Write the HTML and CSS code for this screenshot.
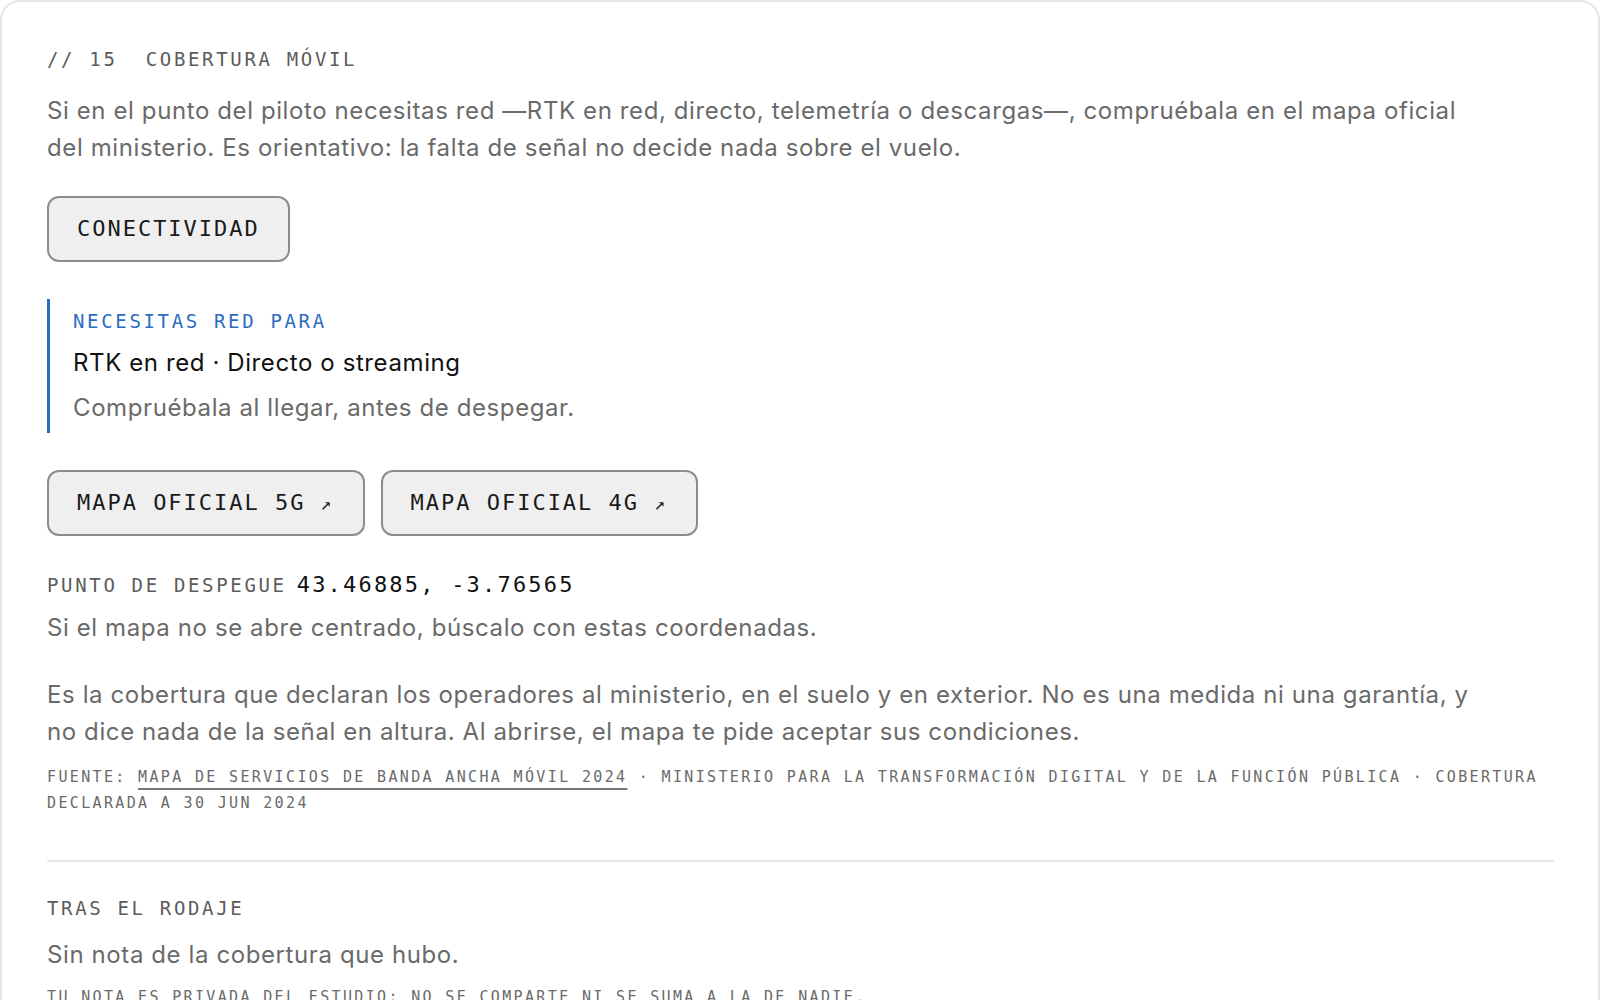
FILE: index.html
```html
<!DOCTYPE html>
<html lang="es">
<head>
  <meta charset="UTF-8" />
  <meta name="viewport" content="width=device-width, initial-scale=1.0"/>
  <title>Cobertura móvil</title>
  <link rel="stylesheet" href="styles.css">
</head>
<body>
  <div class="card">
    <section class="coverage">
      <h2 class="section-title">// 15&nbsp; COBERTURA MÓVIL</h2>
      <p class="lead">Si en el punto del piloto necesitas red —RTK en red, directo, telemetría o descargas—, compruébala en el mapa oficial del ministerio. Es orientativo: la falta de señal no decide nada sobre el vuelo.</p>

      <div class="chip-row first">
        <button class="chip">CONECTIVIDAD</button>
      </div>

      <div class="callout">
        <div class="callout-label">NECESITAS RED PARA</div>
        <div class="callout-needs">RTK en red · Directo o streaming</div>
        <div class="callout-hint">Compruébala al llegar, antes de despegar.</div>
      </div>

      <div class="chip-row maps">
        <a class="chip" href="#">MAPA OFICIAL 5G <span class="ext">↗</span></a>
        <a class="chip" href="#">MAPA OFICIAL 4G <span class="ext">↗</span></a>
      </div>

      <div class="takeoff">
        <span class="label">PUNTO DE DESPEGUE</span>
        <span class="coords">43.46885, -3.76565</span>
      </div>
      <p class="note">Si el mapa no se abre centrado, búscalo con estas coordenadas.</p>

      <p class="lead second">Es la cobertura que declaran los operadores al ministerio, en el suelo y en exterior. No es una medida ni una garantía, y no dice nada de la señal en altura. Al abrirse, el mapa te pide aceptar sus condiciones.</p>
      <p class="source">FUENTE: <a href="#">MAPA DE SERVICIOS DE BANDA ANCHA MÓVIL 2024</a> · MINISTERIO PARA LA TRANSFORMACIÓN DIGITAL Y DE LA FUNCIÓN PÚBLICA · COBERTURA DECLARADA A 30 JUN 2024</p>
    </section>

    <hr class="divider">

    <section class="after">
      <div class="label">TRAS EL RODAJE</div>
      <p class="note">Sin nota de la cobertura que hubo.</p>
      <p class="source">TU NOTA ES PRIVADA DEL ESTUDIO: NO SE COMPARTE NI SE SUMA A LA DE NADIE.</p>
    </section>
  </div>
</body>
</html>
```

FILE: styles.css
```css
body {
  margin: 0;
  background: #fff;
  font-family: Inter, Roboto, "Liberation Sans", sans-serif;
  color: #666;
}

.card {
  border: 2px solid #e6e6e6;
  border-radius: 20px;
  padding: 45px 44px 60px 45px;
  min-height: 1100px;
}

p {
  margin: 0;
}

.section-title,
.label,
.callout-label {
  font-family: "DejaVu Sans Mono", "Liberation Mono", monospace;
  font-size: 19px;
  font-weight: normal;
  line-height: 25px;
  letter-spacing: 0.14em;
  color: #5c5c5c;
  margin: 0;
}

.lead,
.note,
.callout-needs,
.callout-hint {
  font-size: 24px;
  line-height: 37px;
  letter-spacing: 0.025em;
  color: #6a6a6a;
}

.lead {
  max-width: 1440px;
  margin-top: 20px;
}

.lead.second {
  margin-top: 30px;
}

.chip-row {
  display: flex;
  gap: 16px;
}

.chip-row.first {
  margin-top: 30px;
}

.chip-row.maps {
  margin-top: 37px;
}

.chip {
  display: inline-block;
  box-sizing: border-box;
  height: 66px;
  padding: 17px 28px;
  border: 2px solid #8c8c8c;
  border-radius: 12px;
  background: #efefef;
  color: #1a1a1a;
  font-family: "DejaVu Sans Mono", "Liberation Mono", monospace;
  font-size: 22px;
  line-height: 28px;
  letter-spacing: 0.09em;
  text-decoration: none;
  white-space: nowrap;
  cursor: pointer;
}

.chip .ext {
  display: inline-block;
  width: 14px;
  font-size: 18px;
  letter-spacing: 0;
}

.callout {
  margin-top: 37px;
  border-left: 3px solid #2b6cc4;
  padding: 10px 0 7px 23px;
}

.callout .callout-label {
  color: #2b6cc4;
}

.callout-needs {
  margin-top: 10px;
  color: #111;
}

.callout-hint {
  margin-top: 8px;
}

.takeoff {
  display: flex;
  align-items: baseline;
  gap: 10px;
  margin-top: 34px;
}

.coords {
  font-family: "DejaVu Sans Mono", "Liberation Mono", monospace;
  font-size: 22px;
  line-height: 30px;
  letter-spacing: 0.1em;
  color: #111;
}

.note {
  margin-top: 9px;
}

.source {
  font-family: "DejaVu Sans Mono", "Liberation Mono", monospace;
  font-size: 15px;
  line-height: 25.5px;
  letter-spacing: 2.35px;
  color: #6a6a6a;
  margin-top: 15px;
}

.source a {
  color: inherit;
  text-decoration: underline;
  text-decoration-color: #777;
  text-decoration-thickness: 2px;
  text-underline-offset: 6px;
}

.divider {
  border: none;
  height: 2px;
  background: #e8e8e8;
  margin: 44px 0 0;
}

.after .label {
  margin-top: 34px;
}

.after .note {
  margin-top: 15px;
}

.after .source {
  margin-top: 12px;
}
```
